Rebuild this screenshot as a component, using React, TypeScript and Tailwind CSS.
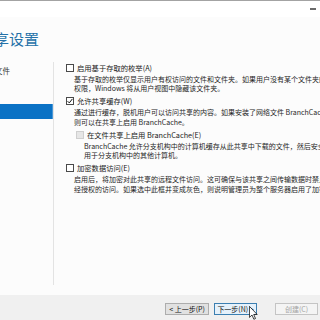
import React from 'react';

const font = { fontFamily: '"Noto Sans CJK SC", "Noto Sans", sans-serif' };

function Box({ state }: { state: 'off' | 'on' | 'disabled' }) {
    if (state === 'disabled') {
        return <div className="w-[8px] h-[8px] shrink-0 bg-[#e6e6e6] border border-[#cfcfcf]" />;
    }
    return (
        <div className="w-[8px] h-[8px] shrink-0 bg-white border border-[#4a4a4a] flex items-center justify-center">
            {state === 'on' && (
                <svg width="6" height="6" viewBox="0 0 6 6">
                    <path d="M0.6 3.2 L2.3 4.9 L5.4 0.9" fill="none" stroke="#111" strokeWidth="1" />
                </svg>
            )}
        </div>
    );
}

function Option({ state, label, lines, indent = false }: { state: 'off' | 'on' | 'disabled'; label: string; lines: string[]; indent?: boolean }) {
    return (
        <div className={indent ? 'ml-[10px]' : ''}>
            <div className="h-[11px] flex items-center gap-[3px]">
                <Box state={state} />
                <span className="text-[7.3px] leading-[10px] text-[#1a1a1a] whitespace-nowrap">{label}</span>
            </div>
            <div className="mt-[1.5px] ml-[8px]">
                {lines.map((l, i) => (
                    <div key={i} className="text-[7px] leading-[9.5px] text-[#262626] whitespace-nowrap">{l}</div>
                ))}
            </div>
        </div>
    );
}

function Btn({ children, kind = 'normal', w }: { children: React.ReactNode; kind?: 'normal' | 'focus' | 'disabled'; w: string }) {
    const look =
        kind === 'focus'
            ? 'border-[#3c7fb1] bg-[#e5f1fb] text-[#111]'
            : kind === 'disabled'
              ? 'border-[#c4c4c4] bg-[#f4f4f4] text-[#a3a3a3]'
              : 'border-[#adadad] bg-[#e1e1e1] text-[#111]';
    return (
        <div className={`${w} h-[12px] border flex items-center justify-center text-[7px] leading-[10px] whitespace-nowrap ${look}`}>
            {children}
        </div>
    );
}

export default function App() {
    const nav = ['选择配置文件', '共享位置', '共享名称'];
    return (
        <div className="w-[320px] h-[320px] overflow-hidden relative flex flex-col bg-[#fcfcfc]" style={font}>
            <div className="h-[17px] shrink-0 bg-white border-t border-[#a3a3a3] flex justify-end pr-[4px] pt-[7px]">
                <div className="w-[6px] h-[1.5px] bg-[#6a6a6a]" />
            </div>

            <div className="h-[45px] shrink-0 pt-[12px]">
                <div className="ml-[-21px] text-[15px] leading-[20px] text-[#2471a8] whitespace-nowrap">共享设置</div>
            </div>

            <div className="flex flex-1 min-h-0">
                <div className="w-[54px] shrink-0 border-r border-[#e3e3e3] pt-[2px] overflow-hidden">
                    {nav.map((n) => (
                        <div key={n} className="h-[13px] flex items-center text-[7.5px] text-[#333] whitespace-nowrap ml-[-35px]">{n}</div>
                    ))}
                    <div className="mt-[1px] h-[15px] bg-[#0b72c5] border-r border-[#4a98d8] flex items-center text-[7.5px] text-white whitespace-nowrap">
                        <span className="ml-[-35px]">其他设置</span>
                    </div>
                    {['权限', '确认', '结果'].map((n) => (
                        <div key={n} className="h-[13px] flex items-center text-[7.5px] text-[#333] whitespace-nowrap ml-[-35px]">{n}</div>
                    ))}
                </div>

                <div className="flex-1 pl-[12px] overflow-hidden flex flex-col gap-[2px]">
                    <Option
                        state="off"
                        label="启用基于存取的枚举(A)"
                        lines={['基于存取的枚举仅显示用户有权访问的文件和文件夹。如果用户没有某个文件夹的', '权限，Windows 将从用户视图中隐藏该文件夹。']}
                    />
                    <Option
                        state="on"
                        label="允许共享缓存(W)"
                        lines={['通过进行缓存，脱机用户可以访问共享的内容。如果安装了网络文件 BranchCache', '则可以在共享上启用 BranchCache。']}
                    />
                    <Option
                        state="disabled"
                        indent
                        label="在文件共享上启用 BranchCache(E)"
                        lines={['BranchCache 允许分支机构中的计算机缓存从此共享中下载的文件，然后安全地使这些文件可', '用于分支机构中的其他计算机。']}
                    />
                    <Option
                        state="off"
                        label="加密数据访问(E)"
                        lines={['启用后，将加密对此共享的远程文件访问。这可确保与该共享之间传输数据时禁止未', '经授权的访问。如果选中此框并变成灰色，则说明管理员为整个服务器启用了加密。']}
                    />
                </div>
            </div>

            <div className="h-[10px] shrink-0" />

            <div className="h-[25px] shrink-0 bg-[#f0f0f0] flex items-start justify-end pt-[8px] pr-[2px]">
                <Btn w="w-[44px]">&lt; 上一步(P)</Btn>
                <div className="w-[5px]" />
                <Btn w="w-[43px]" kind="focus">下一步(N) &gt;</Btn>
                <div className="w-[18px]" />
                <Btn w="w-[43px]" kind="disabled">创建(C)</Btn>
            </div>

            <svg className="absolute left-[249px] top-[306px]" width="9" height="14" viewBox="0 0 12 19">
                <path d="M0.5 0.5 L0.5 15.5 L4 12.2 L6.5 18 L8.7 17 L6.3 11.5 L11 11.5 Z" fill="#fff" stroke="#000" strokeWidth="1" />
            </svg>
        </div>
    );
}
